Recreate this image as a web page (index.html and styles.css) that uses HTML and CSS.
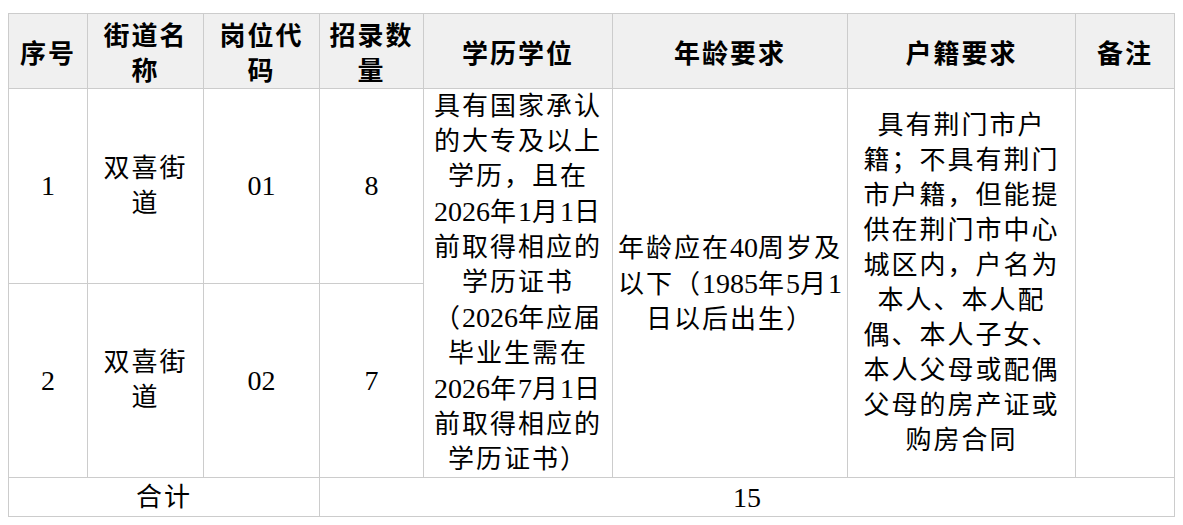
FILE: index.html
```html
<!DOCTYPE html>
<html lang="zh-CN">
<head>
<meta charset="utf-8">
<title>岗位表</title>
<link rel="stylesheet" href="styles.css">
</head>
<body>
<table class="jobs">
  <colgroup>
    <col class="c-no">
    <col class="c-street">
    <col class="c-code">
    <col class="c-count">
    <col class="c-edu">
    <col class="c-age">
    <col class="c-huji">
    <col class="c-note">
  </colgroup>
  <thead>
    <tr class="head-row">
      <th>序号</th>
      <th>街道名<br>称</th>
      <th>岗位代<br>码</th>
      <th>招录数<br>量</th>
      <th>学历学位</th>
      <th>年龄要求</th>
      <th>户籍要求</th>
      <th>备注</th>
    </tr>
  </thead>
  <tbody>
    <tr class="body-row">
      <td class="num">1</td>
      <td>双喜街<br>道</td>
      <td class="num">01</td>
      <td class="num">8</td>
      <td rowspan="2" class="long">具有国家承认<br>的大专及以上<br>学历，且在<br><span class="lat">2026</span>年<span class="lat">1</span>月<span class="lat">1</span>日<br>前取得相应的<br>学历证书<br>（<span class="lat">2026</span>年应届<br>毕业生需在<br><span class="lat">2026</span>年<span class="lat">7</span>月<span class="lat">1</span>日<br>前取得相应的<br>学历证书）</td>
      <td rowspan="2" class="long">年龄应在<span class="lat">40</span>周岁及<br>以下（<span class="lat">1985</span>年<span class="lat">5</span>月<span class="lat">1</span><br>日以后出生）</td>
      <td rowspan="2" class="long">具有荆门市户<br>籍；不具有荆门<br>市户籍，但能提<br>供在荆门市中心<br>城区内，户名为<br>本人、本人配<br>偶、本人子女、<br>本人父母或配偶<br>父母的房产证或<br>购房合同</td>
      <td rowspan="2"></td>
    </tr>
    <tr class="body-row">
      <td class="num">2</td>
      <td>双喜街<br>道</td>
      <td class="num">02</td>
      <td class="num">7</td>
    </tr>
    <tr class="total-row">
      <td colspan="3">合计</td>
      <td colspan="5" class="num">15</td>
    </tr>
  </tbody>
</table>
</body>
</html>
```

FILE: styles.css
```css
html, body {
  margin: 0;
  padding: 0;
  background: #ffffff;
}

body {
  padding: 13px 0 0 8px;
  font-family: "Liberation Serif", "Noto Sans CJK SC", serif;
  color: #000000;
}

.jobs {
  border-collapse: collapse;
  table-layout: fixed;
  width: 1167px;
  font-size: 26px;
  letter-spacing: 2px;
  line-height: 35px;
}

.c-no { width: 79px; }
.c-street { width: 116px; }
.c-code { width: 116px; }
.c-count { width: 104px; }
.c-edu { width: 189px; }
.c-age { width: 235px; }
.c-huji { width: 228px; }
.c-note { width: 99px; }

.jobs th,
.jobs td {
  border: 1px solid #cccccc;
  text-align: center;
  vertical-align: middle;
  padding: 0 2px;
  white-space: nowrap;
}

.jobs th {
  background: #f0f0f0;
  font-family: "Noto Sans CJK SC", sans-serif;
  font-weight: 700;
}

.head-row { height: 75px; }
.body-row { height: 194px; }
.total-row { height: 39px; }

.jobs td {
  font-family: "Liberation Serif", "Noto Sans CJK SC", serif;
  font-weight: 400;
}

.jobs td.num {
  font-size: 28px;
  letter-spacing: 0;
}

.lat {
  font-size: 28px;
  letter-spacing: 0;
}

.long {
  padding: 0;
}
```
